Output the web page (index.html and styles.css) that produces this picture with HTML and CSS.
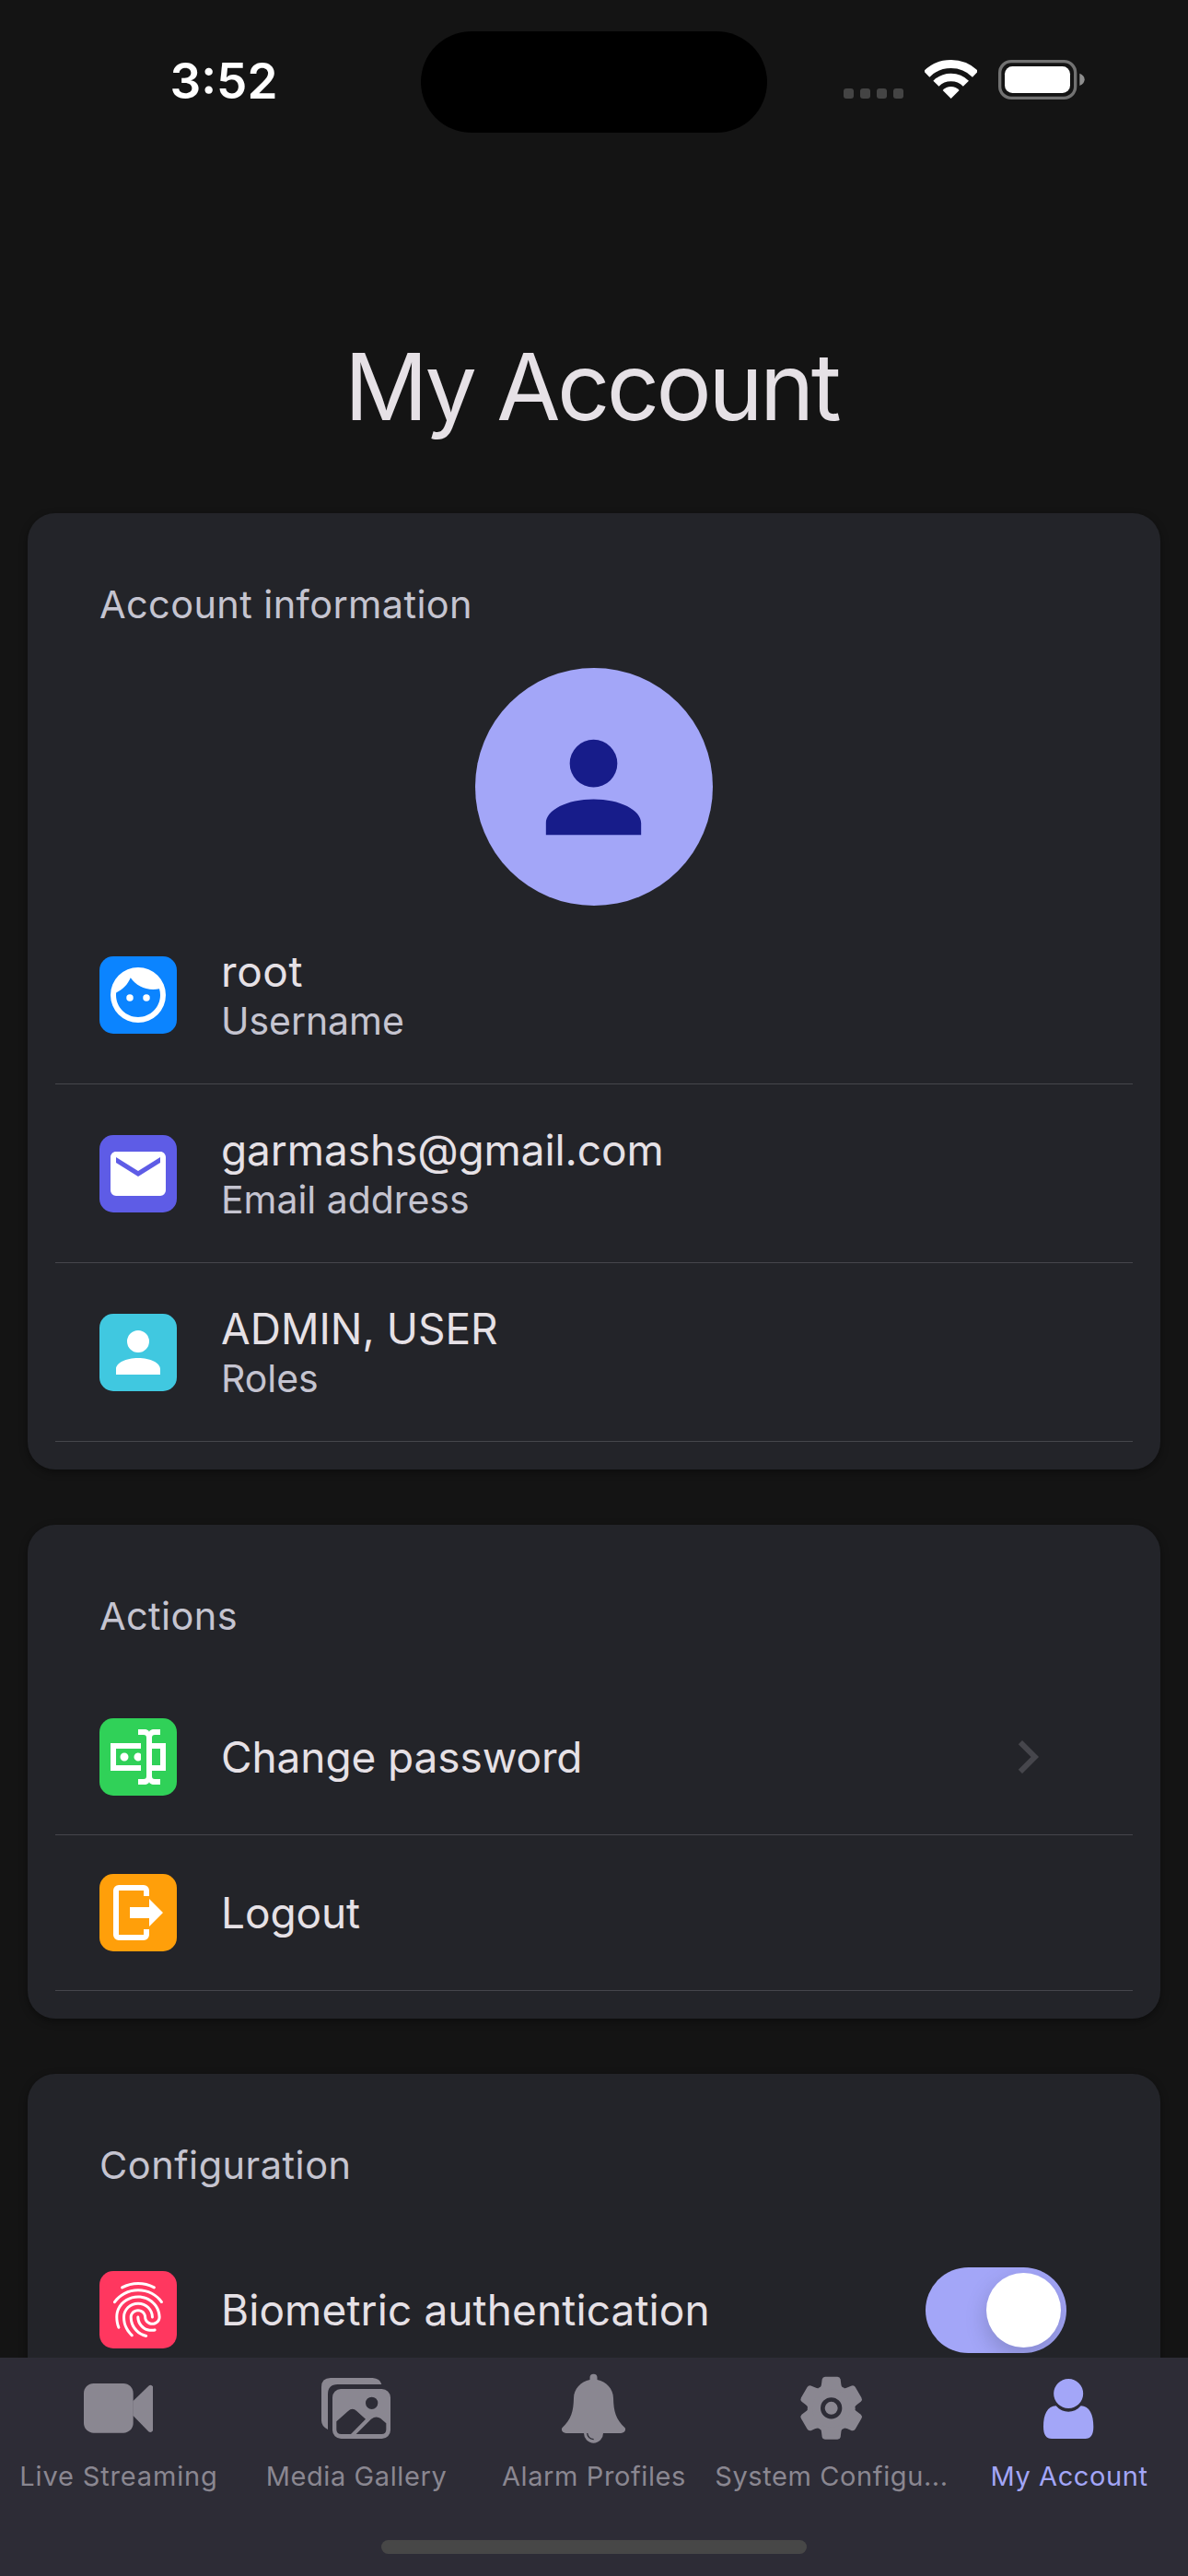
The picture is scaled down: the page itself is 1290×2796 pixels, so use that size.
FILE: index.html
```html
<!DOCTYPE html>
<html lang="en">
<head>
<meta charset="utf-8">
<title>My Account</title>
<link rel="stylesheet" href="styles.css">
</head>
<body>
<div class="screen">
  <header class="status">
    <div class="status-time">3:52</div>
    <div class="island"></div>
    <div class="status-icons">
      <div class="signal"><i></i><i></i><i></i><i></i></div>
      <svg class="wifi" viewBox="372 195 172 127">
        <path d="M378.45 241.45A112.5 112.5 0 0 1 537.55 241.45" fill="none" stroke="#fff" stroke-width="27"/>
        <path d="M409.2 272.2A69 69 0 0 1 506.8 272.2" fill="none" stroke="#fff" stroke-width="26"/>
        <path d="M458 321L431 294Q442 282 458 282T485 294Z" fill="#fff"/>
      </svg>
      <svg class="battery" viewBox="612 195 282 129">
        <rect x="617" y="200" width="246" height="119" rx="37" fill="none" stroke="#727272" stroke-width="10"/>
        <rect x="633" y="216" width="213" height="87" rx="25" fill="#fff"/>
        <path d="M877 239Q893 245 893 259T877 279Z" fill="#8f8f8f"/>
      </svg>
    </div>
  </header>

  <main class="content">
    <h1 class="title">My Account</h1>

    <section class="card">
      <h2 class="card-title">Account information</h2>
      <div class="avatar">
        <svg viewBox="0 0 24 24"><path d="M12 4A4 4 0 0 1 16 8A4 4 0 0 1 12 12A4 4 0 0 1 8 8A4 4 0 0 1 12 4M12 14C16.42 14 20 15.79 20 18V20H4V18C4 15.79 7.58 14 12 14Z"/></svg>
      </div>
      <div class="row row-tall">
        <span class="badge blue"><svg viewBox="0 0 24 24"><path d="M9 11.75A1.25 1.25 0 0 0 7.75 13A1.25 1.25 0 0 0 9 14.25A1.25 1.25 0 0 0 10.25 13A1.25 1.25 0 0 0 9 11.75M15 11.75A1.25 1.25 0 0 0 13.75 13A1.25 1.25 0 0 0 15 14.25A1.25 1.25 0 0 0 16.25 13A1.25 1.25 0 0 0 15 11.75M12 2A10 10 0 0 0 2 12A10 10 0 0 0 12 22A10 10 0 0 0 22 12A10 10 0 0 0 12 2M12 20C7.59 20 4 16.41 4 12C4 11.71 4 11.42 4.05 11.14C6.41 10.09 8.28 8.16 9.26 5.77C11.07 8.33 14.05 10 17.42 10C18.2 10 18.95 9.91 19.67 9.74C19.88 10.45 20 11.21 20 12C20 16.41 16.41 20 12 20Z"/></svg></span>
        <div class="pair"><div class="label spaced">root</div><div class="sub">Username</div></div>
      </div>
      <div class="row row-tall">
        <span class="badge indigo"><svg viewBox="0 0 24 24"><path d="M20 8L12 13L4 8V6L12 11L20 6M20 4H4C2.89 4 2 4.89 2 6V18A2 2 0 0 0 4 20H20A2 2 0 0 0 22 18V6C22 4.89 21.1 4 20 4Z"/></svg></span>
        <div class="pair"><div class="label">garmashs@gmail.com</div><div class="sub">Email address</div></div>
      </div>
      <div class="row row-tall">
        <span class="badge cyan"><svg viewBox="0 0 24 24"><path d="M12 4A4 4 0 0 1 16 8A4 4 0 0 1 12 12A4 4 0 0 1 8 8A4 4 0 0 1 12 4M12 14C16.42 14 20 15.79 20 18V20H4V18C4 15.79 7.58 14 12 14Z"/></svg></span>
        <div class="pair"><div class="label caps">ADMIN, USER</div><div class="sub">Roles</div></div>
      </div>
    </section>

    <section class="card">
      <h2 class="card-title">Actions</h2>
      <div class="row">
        <span class="badge green"><svg viewBox="0 0 24 24"><path d="M17 7H22V17H17V19A1 1 0 0 0 18 20H20V22H17.5C16.95 22 16 21.55 16 21C16 21.55 15.05 22 14.5 22H12V20H14A1 1 0 0 0 15 19V5A1 1 0 0 0 14 4H12V2H14.5C15.05 2 16 2.45 16 3C16 2.45 16.95 2 17.5 2H20V4H18A1 1 0 0 0 17 5V7M2 7H13V9H4V15H13V17H2V7M20 15V9H17V15H20M8.5 12A1.5 1.5 0 0 0 7 10.5A1.5 1.5 0 0 0 5.5 12A1.5 1.5 0 0 0 7 13.5A1.5 1.5 0 0 0 8.5 12M13 10.89C12.39 10.33 11.44 10.38 10.88 11C10.32 11.6 10.37 12.55 11 13.11C11.55 13.63 12.43 13.63 13 13.11V10.89Z"/></svg></span>
        <div class="label">Change password</div>
        <svg class="chevron" viewBox="0 0 24 24"><path d="M8.59 16.58L13.17 12L8.59 7.41L10 6L16 12L10 18L8.59 16.58Z"/></svg>
      </div>
      <div class="row">
        <span class="badge orange"><svg viewBox="0 0 24 24"><path d="M16 6V4A2 2 0 0 0 14 2H5A2 2 0 0 0 3 4V20A2 2 0 0 0 5 22H14A2 2 0 0 0 16 20V18H14V20H5V4H14V6ZM9 10H16V7L21 12L16 17V14H9Z"/></svg></span>
        <div class="label">Logout</div>
      </div>
    </section>

    <section class="card">
      <h2 class="card-title wide">Configuration</h2>
      <div class="row row-switch">
        <span class="badge red"><svg viewBox="0 0 24 24"><path d="M17.81 4.47c-.08 0-.16-.02-.23-.06C15.66 3.42 14 3 12.01 3c-1.98 0-3.86.47-5.57 1.41-.24.13-.54.04-.68-.2-.13-.24-.04-.55.2-.68C7.82 2.52 9.86 2 12.01 2c2.13 0 3.99.47 6.03 1.52.25.13.34.43.21.67-.09.18-.26.28-.44.28zM3.5 9.72c-.1 0-.2-.03-.29-.09-.23-.16-.28-.47-.12-.7.99-1.4 2.25-2.5 3.75-3.27C9.98 4.04 14 4.03 17.15 5.65c1.5.77 2.76 1.86 3.75 3.25.16.22.11.54-.12.7-.23.16-.54.11-.7-.12-.9-1.26-2.04-2.25-3.39-2.94-2.87-1.47-6.54-1.47-9.4.01-1.36.7-2.5 1.7-3.4 2.96-.08.14-.23.21-.39.21zm6.25 12.07c-.13 0-.26-.05-.35-.15-.87-.87-1.34-1.43-2.01-2.64-.69-1.23-1.05-2.73-1.05-4.34 0-2.97 2.54-5.39 5.66-5.39s5.66 2.42 5.66 5.39c0 .28-.22.5-.5.5s-.5-.22-.5-.5c0-2.42-2.09-4.39-4.66-4.39-2.57 0-4.66 1.97-4.66 4.39 0 1.44.32 2.77.93 3.85.64 1.15 1.08 1.64 1.85 2.42.19.2.19.51 0 .71-.11.1-.24.15-.37.15zm7.17-1.85c-1.19 0-2.24-.3-3.1-.89-1.49-1.01-2.38-2.65-2.38-4.39 0-.28.22-.5.5-.5s.5.22.5.5c0 1.41.72 2.74 1.94 3.56.71.48 1.54.71 2.54.71.24 0 .64-.03 1.04-.1.27-.05.53.13.58.41.05.27-.13.53-.41.58-.57.11-1.07.12-1.21.12zM14.91 22c-.04 0-.09-.01-.13-.02-1.59-.44-2.63-1.03-3.72-2.1-1.4-1.39-2.17-3.24-2.17-5.22 0-1.62 1.38-2.94 3.08-2.94 1.7 0 3.08 1.32 3.08 2.94 0 1.07.93 1.94 2.08 1.94s2.08-.87 2.08-1.94c0-3.77-3.25-6.83-7.25-6.83-2.84 0-5.44 1.58-6.61 4.03-.39.81-.59 1.76-.59 2.8 0 .78.07 2.01.67 3.61.1.26-.03.55-.29.64-.26.1-.55-.04-.64-.29-.49-1.31-.73-2.61-.73-3.96 0-1.2.23-2.29.68-3.24 1.33-2.79 4.28-4.6 7.51-4.6 4.55 0 8.25 3.51 8.25 7.83 0 1.62-1.38 2.94-3.08 2.94s-3.08-1.32-3.08-2.94c0-1.07-.93-1.94-2.08-1.94s-2.08.87-2.08 1.94c0 1.71.66 3.31 1.87 4.51.95.94 1.86 1.46 3.27 1.85.27.07.42.35.35.61-.05.23-.26.38-.47.38z"/></svg></span>
        <div class="label loose">Biometric authentication</div>
        <div class="switch"><span class="knob"></span></div>
      </div>
    </section>
  </main>

  <nav class="tabs">
    <div class="tab-list">
      <div class="tab">
        <svg viewBox="0 0 270 270"><rect x="21" y="54" width="161" height="161" rx="32"/><path d="M181 112L232 62Q240 56 246 64V208Q240 216 232 211L181 158Z"/></svg>
        <span class="tab-label first">Live Streaming</span>
      </div>
      <div class="tab">
        <svg viewBox="0 0 270 270"><path d="M21 66Q21 36 51 36H188Q212 38 217 57H74Q42 57 42 89V204Q21 194 21 175Z"/><path fill-rule="evenodd" d="M84 72H218A28 28 0 0 1 246 100V206A28 28 0 0 1 218 234H85A28 28 0 0 1 57 206V100A28 28 0 0 1 84 72ZM185 98A20 20 0 1 0 185 138A20 20 0 1 0 185 98ZM70 178L108 144Q122 131 136 144L165 170L117 219H86Q70 219 70 204ZM134 219L183 170Q199 158 214 168L232 184V204Q232 219 217 219Z"/></svg>
        <span class="tab-label">Media Gallery</span>
      </div>
      <div class="tab">
        <svg viewBox="0 0 270 270"><path d="M133.5 23A12 12 0 0 1 145.5 35V42C175 48 198 72 198 102C199 145 206 170 236 199C240 206 234 216 222 216H45C33 216 27 206 31 199C61 170 68 145 69 102C69 72 92 48 121.5 42V35A12 12 0 0 1 133.5 23Z"/><path d="M102 214H165V216A31.5 32 0 0 1 102 216Z"/><path class="gap" d="M113 216Q115 234 134 236"/></svg>
        <span class="tab-label">Alarm Profiles</span>
      </div>
      <div class="tab">
        <svg viewBox="0 0 270 270">
          <defs><path id="tooth" d="M0 0L-42 -66Q-33 -66 -32 -78L-30 -94Q-28 -102 -20 -102H20Q28 -102 30 -94L32 -78Q33 -66 42 -66Z"/></defs>
          <g transform="translate(134 134.5)">
            <use href="#tooth"/><use href="#tooth" transform="rotate(60)"/><use href="#tooth" transform="rotate(120)"/><use href="#tooth" transform="rotate(180)"/><use href="#tooth" transform="rotate(240)"/><use href="#tooth" transform="rotate(300)"/>
            <circle r="62"/>
            <circle class="gap ring" r="28"/>
          </g>
        </svg>
        <span class="tab-label">System Configu...</span>
      </div>
      <div class="tab active">
        <svg viewBox="0 0 270 270"><circle cx="132.5" cy="87" r="48"/><path d="M92 127C64 128 51 155 51 195Q51 234 78 234H187Q214 234 214 195C214 155 201 128 173 127C161 141 147 146 132.5 146C118 146 104 141 92 127Z"/></svg>
        <span class="tab-label">My Account</span>
      </div>
    </div>
    <div class="home-bar"></div>
  </nav>
</div>
</body>
</html>
```
FILE: styles.css
```css
:root {
  --bg: #141414;
  --card: #232429;
  --bar: #2d2c36;
  --accent: #a3a6f8;
  --text: #e6e1e6;
  --muted: #c5c4d0;
  --line: #46464c;
  --inactive: #8a8791;
}

* { box-sizing: border-box; }

body {
  margin: 0;
  background: var(--bg);
  color: var(--text);
  font-family: Inter, "Liberation Sans", sans-serif;
}

.screen {
  display: flex;
  flex-direction: column;
  width: 1290px;
  height: 2796px;
  overflow: hidden;
}

/* Status bar */
.status {
  display: grid;
  grid-template-columns: 457px 376px 1fr;
  flex: none;
  height: 177px;
  padding-top: 34px;
}

.status-time {
  padding-left: 29px;
  height: 110px;
  line-height: 108px;
  text-align: center;
  font-size: 53px;
  font-weight: 600;
  color: #fff;
}

.island {
  height: 110px;
  border-radius: 55px;
  background: #000;
}

.status-icons {
  display: flex;
  align-items: flex-end;
  height: 74px;
  padding-left: 83px;
}

.signal {
  display: flex;
  gap: 7px;
  margin-bottom: 1px;
}

.signal i {
  width: 11px;
  height: 11px;
  border-radius: 3px;
  background: #444;
}

.wifi {
  width: 57.3px;
  height: 42.3px;
  margin: 0 22.7px 1px 23px;
}

.battery {
  width: 94px;
  height: 43px;
}

/* Scrolling content */
.content {
  flex: 1;
  min-height: 0;
  overflow: hidden;
}

.title {
  margin: 183px 0 77px;
  padding-right: 6px;
  text-align: center;
  font-size: 100.5px;
  line-height: 120px;
  font-weight: 400;
  letter-spacing: -3.6px;
}

.card {
  margin: 0 30px 60px;
  padding: 69px 30px 30px;
  border-radius: 30px;
  background: var(--card);
  box-shadow: 0 3px 9px rgba(0, 0, 0, .4);
}

.card-title {
  margin: 0 0 39px;
  padding-left: 48px;
  font-size: 41.5px;
  line-height: 60px;
  font-weight: 400;
  letter-spacing: .38px;
  color: var(--muted);
}

.card-title.wide { letter-spacing: .5px; }

.avatar {
  display: flex;
  align-items: center;
  justify-content: center;
  width: 258px;
  height: 258px;
  margin: 0 auto;
  border-radius: 50%;
  background: var(--accent);
}

.avatar svg {
  width: 155px;
  height: 155px;
  margin-right: 2px;
  fill: #171c8a;
}

.row {
  display: flex;
  align-items: center;
  gap: 48px;
  height: 169px;
  padding: 0 72px 0 48px;
  border-bottom: 1px solid var(--line);
}

.row-tall { height: 194px; }
.row-switch { height: 177px; }

.badge {
  display: flex;
  align-items: center;
  justify-content: center;
  flex: none;
  width: 84px;
  height: 84px;
  border-radius: 15px;
}

.badge svg {
  width: 72px;
  height: 72px;
  fill: #fff;
}

.blue { background: #0b84ff; }
.indigo { background: #5e5ce6; }
.cyan { background: #40c8e0; }
.green { background: #30d158; }
.orange { background: #ff9f0a; }
.red { background: #ff375f; }

.pair { padding-top: 3px; }

.label {
  font-size: 46px;
  line-height: 54px;
  letter-spacing: -.1px;
  white-space: nowrap;
}

.label.caps { letter-spacing: 0; }
.label.spaced { letter-spacing: .6px; }
.label.loose { letter-spacing: .1px; }

.sub {
  font-size: 41px;
  line-height: 54px;
  letter-spacing: -.05px;
  color: var(--muted);
}

.chevron {
  width: 72px;
  height: 72px;
  margin: 0 6px 0 auto;
  fill: var(--line);
}

.switch {
  display: flex;
  justify-content: flex-end;
  align-items: center;
  width: 153px;
  height: 93px;
  margin-left: auto;
  padding: 6px;
  border-radius: 47px;
  background: var(--accent);
  overflow: hidden;
}

.knob {
  width: 81px;
  height: 81px;
  border-radius: 50%;
  background: #fff;
  box-shadow: 0 9px 24px rgba(0, 0, 0, .18);
}

/* Tab bar */
.tabs {
  display: flex;
  flex-direction: column;
  flex: none;
  height: 237px;
  background: var(--bar);
}

.tab-list {
  display: grid;
  grid-template-columns: repeat(5, 258px);
  height: 198px;
  padding-top: 10px;
}

.tab {
  display: flex;
  flex-direction: column;
  align-items: center;
  color: var(--inactive);
}

.tab.active { color: var(--accent); }

.tab svg {
  width: 90px;
  height: 90px;
  fill: currentColor;
}

.tab .gap {
  fill: none;
  stroke: var(--bar);
  stroke-width: 4;
}

.tab .ring { stroke-width: 14; }

.tab-label {
  margin-top: 8px;
  font-size: 29px;
  line-height: 42px;
  letter-spacing: .6px;
  white-space: nowrap;
}

.tab-label.first { letter-spacing: .85px; }

.home-bar {
  width: 462px;
  height: 15px;
  margin: 0 auto;
  border-radius: 8px;
  background: #474747;
}
```
